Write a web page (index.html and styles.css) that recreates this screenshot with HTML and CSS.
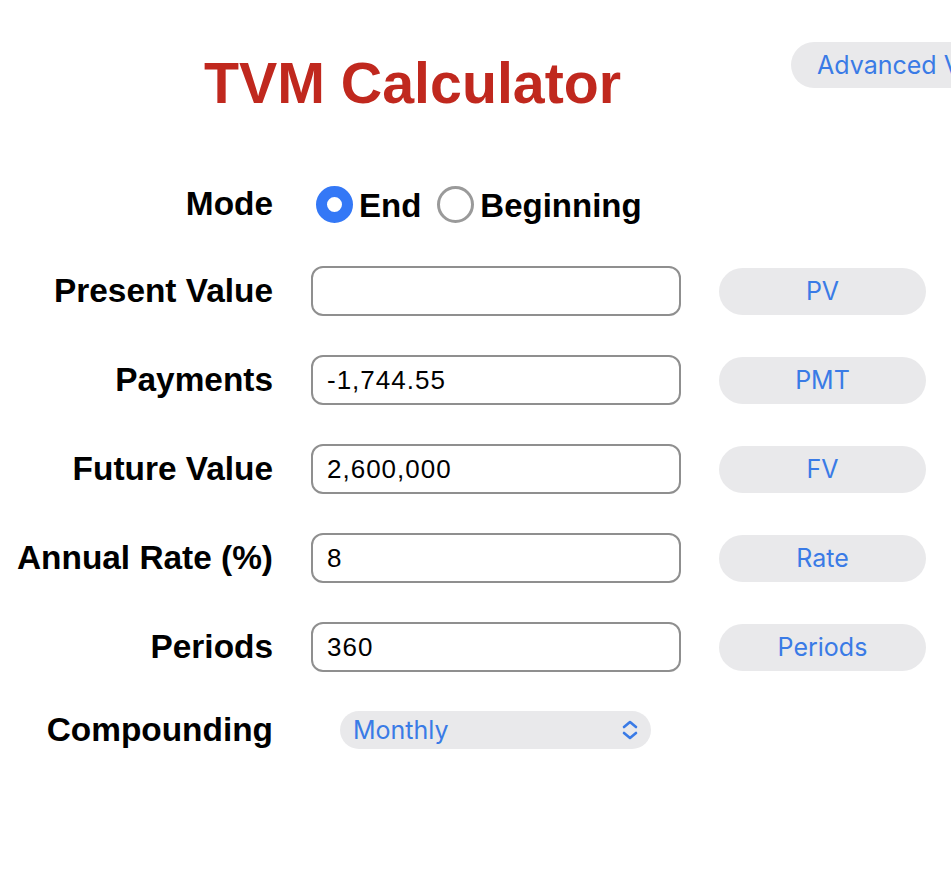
FILE: index.html
```html
<html lang="en">
<head>
  <meta charset="UTF-8">
  <meta name="viewport" content="width=device-width, initial-scale=1.0">
  <title>TVM Calculator</title>
  <link rel="stylesheet" href="styles.css">
</head>
<body>
  <div class="page">
    <header class="header">
      <h1 class="title">TVM Calculator</h1>
      <button class="pill advanced">Advanced View</button>
    </header>

    <form class="tvm-form" onsubmit="return false">
      <div class="label">Mode</div>
      <div class="mode">
        <label class="radio">
          <input type="radio" name="mode" value="end" checked>
          <span>End</span>
        </label>
        <label class="radio">
          <input type="radio" name="mode" value="begin">
          <span>Beginning</span>
        </label>
      </div>

      <label class="label" for="pv">Present Value</label>
      <input class="field" id="pv" type="text" value="">
      <button class="pill solve">PV</button>

      <label class="label" for="pmt">Payments</label>
      <input class="field" id="pmt" type="text" value="-1,744.55">
      <button class="pill solve">PMT</button>

      <label class="label" for="fv">Future Value</label>
      <input class="field" id="fv" type="text" value="2,600,000">
      <button class="pill solve">FV</button>

      <label class="label" for="rate">Annual Rate (%)</label>
      <input class="field" id="rate" type="text" value="8">
      <button class="pill solve">Rate</button>

      <label class="label" for="periods">Periods</label>
      <input class="field" id="periods" type="text" value="360">
      <button class="pill solve">Periods</button>

      <label class="label" for="compounding">Compounding</label>
      <div class="select-wrap">
        <select id="compounding" class="select">
          <option>Monthly</option>
          <option>Quarterly</option>
          <option>Annually</option>
        </select>
        <svg class="chevrons" viewBox="0 0 20 22" width="20" height="22">
          <path d="M4 8 L10 3 L16 8 M4 14 L10 19 L16 14" fill="none" stroke="#3a7be6" stroke-width="2.6" stroke-linecap="round" stroke-linejoin="round"/>
        </svg>
      </div>
    </form>
  </div>
</body>
</html>
```

FILE: styles.css
```css
* {
  box-sizing: border-box;
  margin: 0;
  padding: 0;
}

body {
  background: #fff;
  font-family: "Liberation Sans", Arial, sans-serif;
  color: #000;
  overflow-x: hidden;
}

.page {
  width: 951px;
}

.header {
  display: flex;
  align-items: flex-start;
  padding-top: 42px;
}

.title {
  margin-left: 204px;
  margin-top: 8px;
  font-size: 57.3px;
  line-height: 66px;
  font-weight: bold;
  color: #c0281e;
  white-space: nowrap;
}

.pill {
  font-family: Inter, "Open Sans", sans-serif;
  font-size: 25px;
  color: #3a7be6;
  background: #e9e9eb;
  border: none;
  border-radius: 999px;
  cursor: pointer;
}

.advanced {
  flex-shrink: 0;
  margin-left: 170px;
  height: 46px;
  padding: 0 26px;
  white-space: nowrap;
}

.tvm-form {
  display: grid;
  grid-template-columns: 273px 370px 207px;
  column-gap: 38px;
  row-gap: 39px;
  align-items: center;
  margin-top: 65px;
}

.label {
  text-align: right;
  font-size: 33.4px;
  font-weight: bold;
  white-space: nowrap;
}

.mode {
  grid-column: 2 / span 2;
  display: flex;
  align-items: center;
  height: 46px;
  padding-left: 5px;
}

.radio {
  display: flex;
  align-items: center;
  gap: 6px;
  font-size: 33px;
  font-weight: bold;
  margin-right: 16px;
}

.radio span {
  padding-top: 3px;
}

.radio input {
  appearance: none;
  -webkit-appearance: none;
  width: 37px;
  height: 37px;
  border-radius: 50%;
  border: 3px solid #9a9a9a;
  background: #fff;
  margin: 0;
}

.radio input:checked {
  border: 11.5px solid #3478f6;
}

.field {
  width: 370px;
  height: 50px;
  border: 2px solid #8f8f8f;
  border-radius: 12px;
  padding: 0 14px;
  font-family: "Liberation Sans", Arial, sans-serif;
  font-size: 26px;
  letter-spacing: 1px;
  color: #000;
  background: #fff;
  outline: none;
}

.solve {
  width: 207px;
  height: 47px;
}

.select-wrap {
  position: relative;
  margin-left: 29px;
  width: 311px;
  height: 38px;
}

.select {
  appearance: none;
  -webkit-appearance: none;
  width: 100%;
  height: 100%;
  border: none;
  border-radius: 19px;
  background: #e9e9eb;
  padding-left: 13px;
  font-family: Inter, "Open Sans", sans-serif;
  font-size: 25px;
  color: #3a7be6;
  outline: none;
}

.chevrons {
  position: absolute;
  right: 11px;
  top: 8px;
  pointer-events: none;
}
```
